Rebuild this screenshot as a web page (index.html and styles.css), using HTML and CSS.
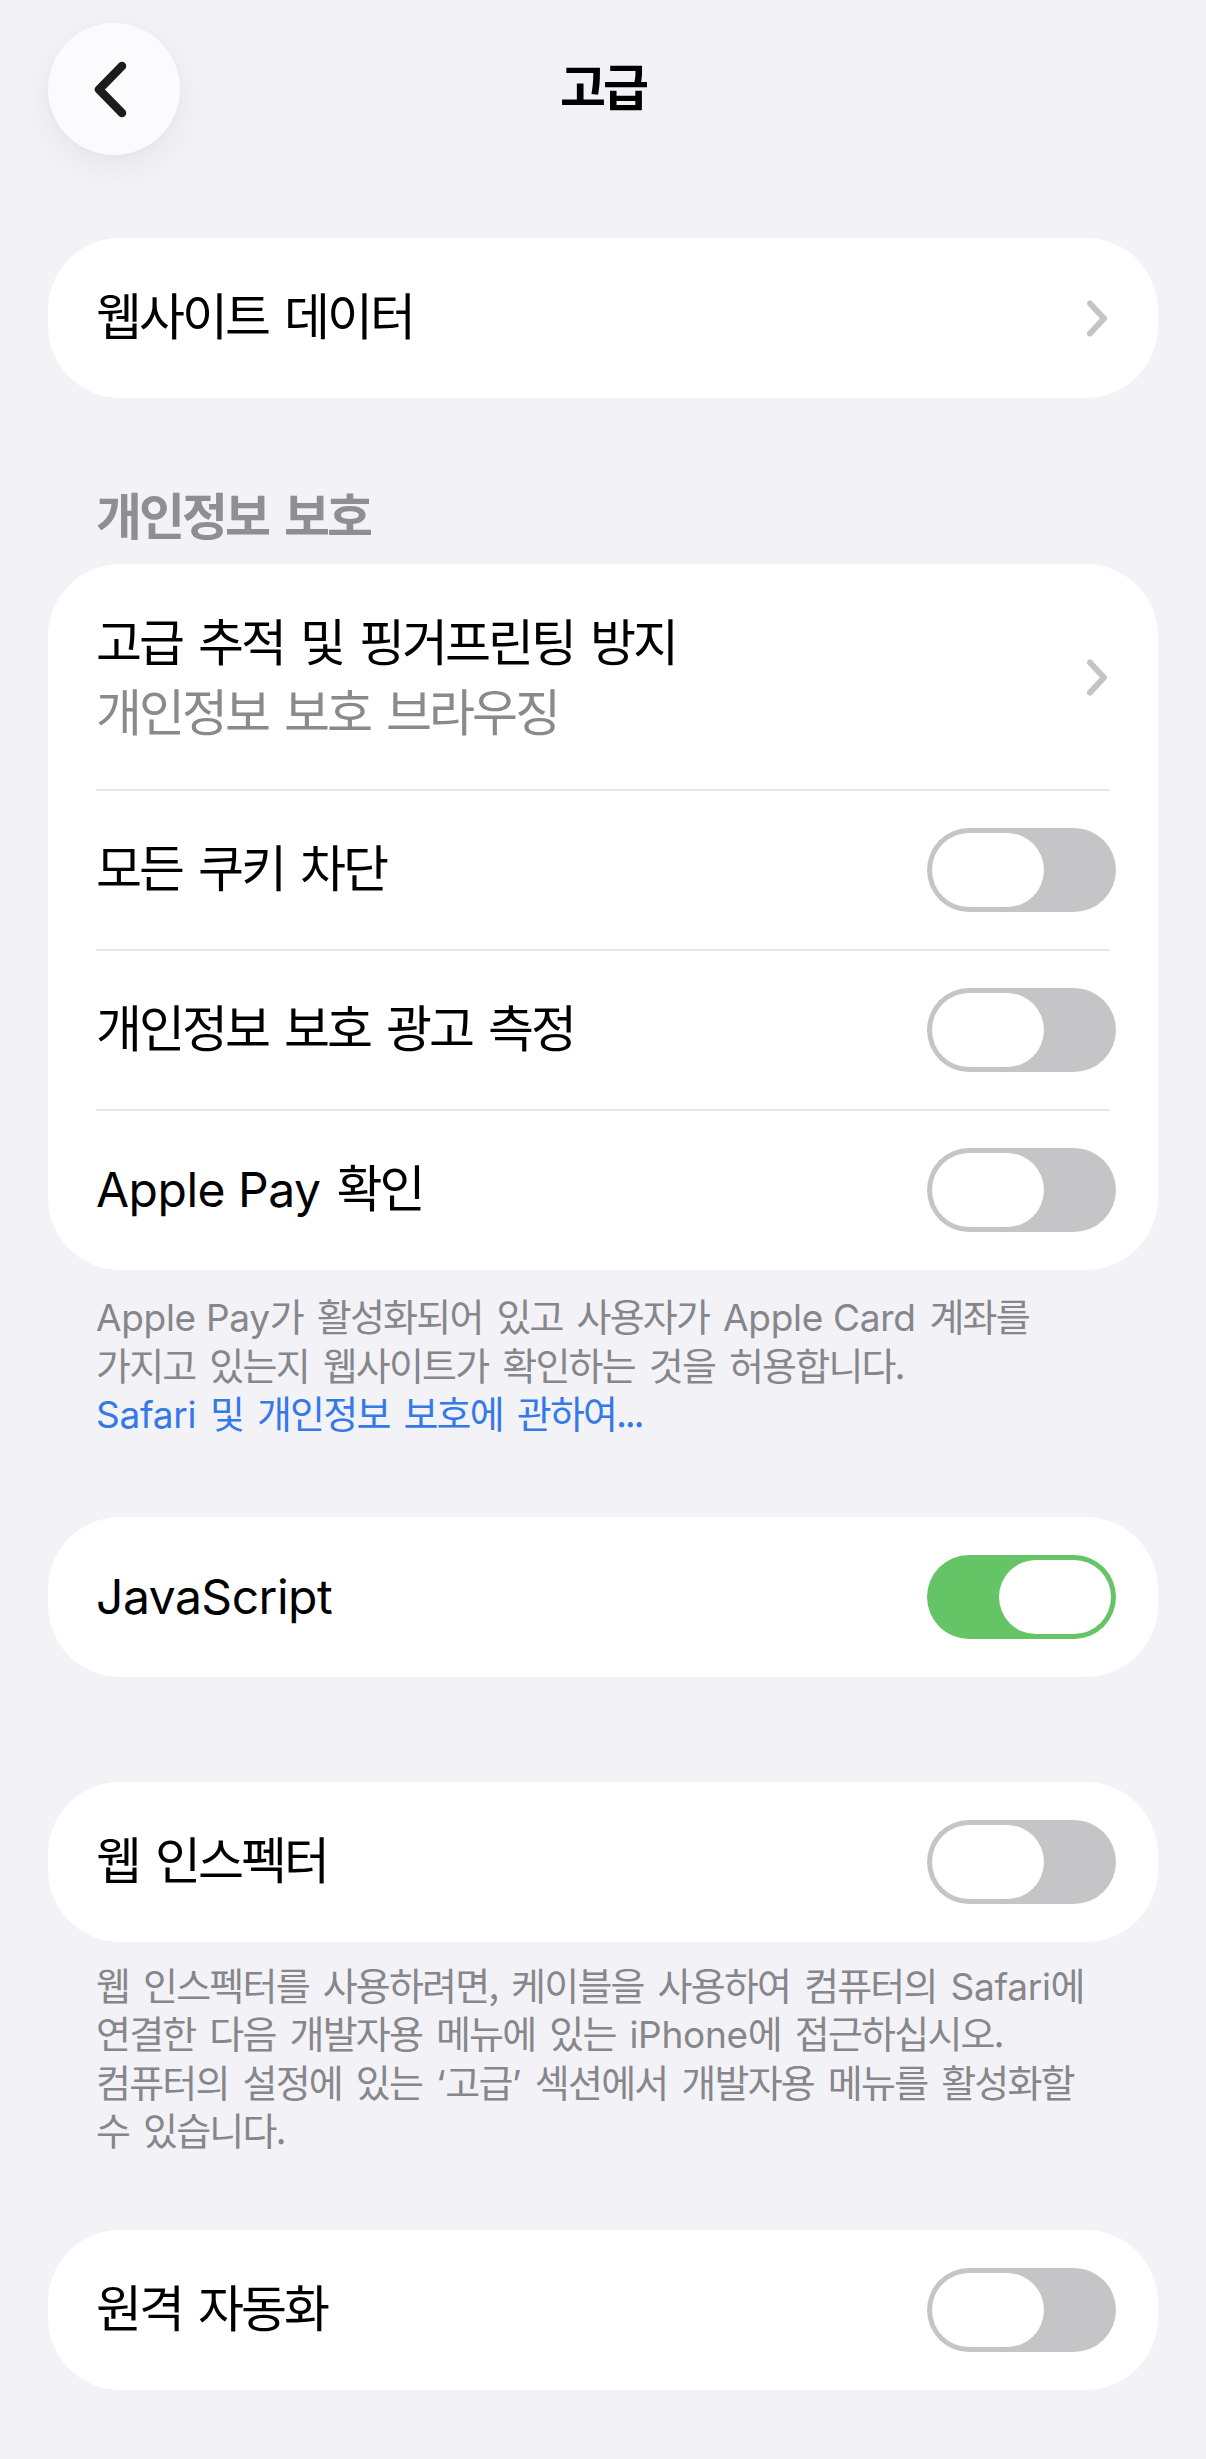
FILE: index.html
```html
<!DOCTYPE html>
<html lang="ko">
<head>
<meta charset="utf-8">
<title>고급</title>
<link rel="stylesheet" href="styles.css">
</head>
<body>
<div class="screen">
  <header class="nav">
    <button class="back" aria-label="뒤로">
      <svg viewBox="0 0 132 132" width="132" height="132"><path d="M74 43 L51 66.5 L74 90"/></svg>
    </button>
    <h1 class="title">고급</h1>
    <span class="nav-spacer"></span>
  </header>

  <main class="content">
    <section class="card card-first">
      <div class="row">
        <span class="label">웹사이트 데이터</span>
        <svg class="chev" width="20" height="37" viewBox="0 0 20 37"><path d="M3 3.5 L17 18.5 L3 33.5"/></svg>
      </div>
    </section>

    <h2 class="section-title">개인정보 보호</h2>
    <section class="card card-privacy">
      <div class="row row-tall">
        <div class="stack">
          <span class="label">고급 추적 및 핑거프린팅 방지</span>
          <span class="sublabel">개인정보 보호 브라우징</span>
        </div>
        <svg class="chev" width="20" height="37" viewBox="0 0 20 37"><path d="M3 3.5 L17 18.5 L3 33.5"/></svg>
      </div>
      <div class="sep"></div>
      <div class="row">
        <span class="label">모든 쿠키 차단</span>
        <span class="toggle"><span class="knob"></span></span>
      </div>
      <div class="sep"></div>
      <div class="row">
        <span class="label">개인정보 보호 광고 측정</span>
        <span class="toggle"><span class="knob"></span></span>
      </div>
      <div class="sep"></div>
      <div class="row">
        <span class="label"><span class="lat">Apple Pay</span> 확인</span>
        <span class="toggle"><span class="knob"></span></span>
      </div>
    </section>
    <p class="note note-applepay"><span class="line"><span class="lat">Apple Pay</span>가 활성화되어 있고 사용자가 <span class="lat">Apple Card</span> 계좌를</span><span class="line">가지고 있는지 웹사이트가 확인하는 것을 허용합니다.</span><a class="line link" href="#"><span class="lat">Safari</span> 및 개인정보 보호에 관하여...</a></p>

    <section class="card card-js">
      <div class="row">
        <span class="label"><span class="lat">JavaScript</span></span>
        <span class="toggle on"><span class="knob"></span></span>
      </div>
    </section>

    <section class="card card-inspector">
      <div class="row">
        <span class="label">웹 인스펙터</span>
        <span class="toggle"><span class="knob"></span></span>
      </div>
    </section>
    <p class="note note-inspector"><span class="line">웹 인스펙터를 사용하려면, 케이블을 사용하여 컴퓨터의 <span class="lat">Safari</span>에</span><span class="line">연결한 다음 개발자용 메뉴에 있는 <span class="lat">iPhone</span>에 접근하십시오.</span><span class="line">컴퓨터의 설정에 있는 <span class="lat">‘</span>고급<span class="lat">’</span> 섹션에서 개발자용 메뉴를 활성화할</span><span class="line">수 있습니다.</span></p>

    <section class="card card-remote">
      <div class="row">
        <span class="label">원격 자동화</span>
        <span class="toggle"><span class="knob"></span></span>
      </div>
    </section>
  </main>
</div>
</body>
</html>
```

FILE: styles.css
```css
* { box-sizing: border-box; }

html, body {
  margin: 0;
  background: #f2f2f7;
}

body {
  font-family: "Noto Sans CJK KR", sans-serif;
  color: #000;
  -webkit-font-smoothing: antialiased;
}

.screen {
  width: 1206px;
  min-height: 2459px;
}

/* navigation bar */
.nav {
  display: grid;
  grid-template-columns: 132px 1fr 132px;
  align-items: center;
  padding: 23px 48px 0;
}

.back {
  width: 132px;
  height: 132px;
  border: 0;
  padding: 0;
  border-radius: 50%;
  background: #fbfbfd;
  box-shadow: 0 12px 40px rgba(0, 0, 0, 0.06), 0 2px 8px rgba(0, 0, 0, 0.02);
  display: flex;
  align-items: center;
  justify-content: center;
}

.back svg { display: block; }

.back path {
  fill: none;
  stroke: #1c1c1e;
  stroke-width: 8.5;
  stroke-linecap: round;
  stroke-linejoin: round;
}

.title {
  margin: 0;
  text-align: center;
  font-size: 50px;
  font-weight: 700;
  letter-spacing: -3px;
  line-height: 60px;
  padding-bottom: 10px;
}

/* content */
.content {
  padding: 0 48px;
}

.card {
  background: #fff;
  border-radius: 72px;
  padding: 1px 0;
}

.card-first { margin-top: 83px; }
.card-js { margin-top: 80px; }
.card-inspector { margin-top: 105px; }
.card-remote { margin-top: 76px; }

.section-title {
  margin: 85px 0 15px;
  padding: 0 0 6px 48px;
  font-size: 50px;
  font-weight: 700;
  color: #8e8e93;
  letter-spacing: -3px;
  word-spacing: 5px;
  line-height: 60px;
}

.row {
  height: 158px;
  display: flex;
  align-items: center;
  justify-content: space-between;
  padding: 0 42px 0 48px;
}

.row-tall { height: 224px; }

.label {
  font-size: 50px;
  letter-spacing: -3px;
  word-spacing: 5px;
  line-height: 60px;
  padding-bottom: 10px;
  white-space: nowrap;
}

.stack {
  display: flex;
  flex-direction: column;
  gap: 6px;
  padding-bottom: 6px;
}

.stack .label {
  line-height: 64px;
  padding-bottom: 0;
}

.sublabel {
  font-size: 50px;
  letter-spacing: -3px;
  word-spacing: 5px;
  line-height: 64px;
  color: #8a8a8e;
  white-space: nowrap;
}

.lat {
  font-family: "Inter", "Liberation Sans", sans-serif;
  font-size: 48px;
  letter-spacing: -0.5px;
  word-spacing: 0;
  line-height: 1;
}

.chev {
  display: block;
  margin-right: 9px;
}

.chev path {
  fill: none;
  stroke: #c4c4c7;
  stroke-width: 6;
  stroke-linecap: round;
  stroke-linejoin: round;
}

.sep {
  height: 2px;
  margin: 0 48px;
  background: #e5e5ea;
}

/* toggles */
.toggle {
  width: 189px;
  height: 84px;
  border-radius: 42px;
  background: #c5c5c7;
  padding: 5px;
  display: flex;
  justify-content: flex-start;
  flex-shrink: 0;
}

.toggle.on {
  background: #65c466;
  justify-content: flex-end;
}

.knob {
  width: 112px;
  height: 74px;
  border-radius: 37px;
  background: #fff;
}

/* footnotes */
.note {
  margin: 21px 0 0;
  padding: 0 48px;
  font-size: 38px;
  letter-spacing: -1.8px;
  word-spacing: 5px;
  line-height: 48.5px;
  color: #86868b;
  white-space: nowrap;
}

.note .line {
  display: block;
  height: 48.5px;
}

.note-inspector { margin-top: 18px; }

.note .lat {
  font-size: 37px;
  letter-spacing: -0.3px;
  line-height: 1;
}

.link {
  color: #3479e6;
  text-decoration: none;
}
```
